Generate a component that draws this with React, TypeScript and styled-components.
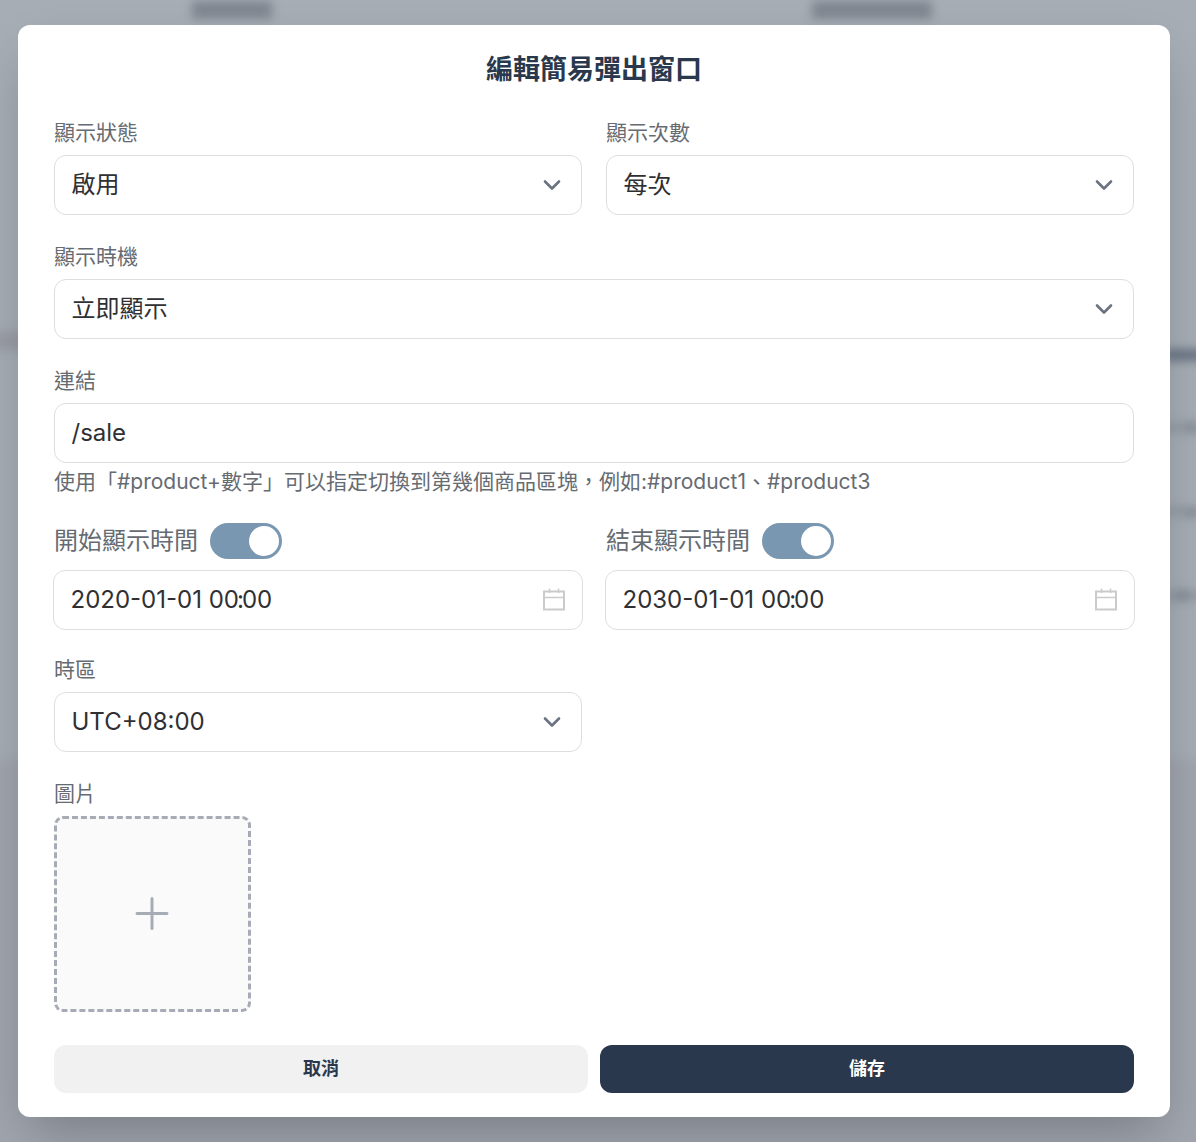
import React from "react";
import styled, { createGlobalStyle } from "styled-components";

const FONT = `Inter, "Noto Sans CJK TC", "Noto Sans", sans-serif`;

const Global = createGlobalStyle`
  html, body { margin: 0; padding: 0; background: #a6adb5; }
  * { box-sizing: border-box; }
  body { font-family: ${FONT}; overflow: hidden; }
`;

const Page = styled.div`
  position: relative;
  width: 1196px;
  height: 1142px;
  overflow: hidden;
  background: #a6adb5;
`;

const Blurred = styled.div`
  position: absolute;
  inset: -20px;
  filter: blur(5px);
`;

const Smudge = styled.div<{ $x: number; $y: number; $w: number; $h: number; $c?: string }>`
  position: absolute;
  left: ${(p) => p.$x + 20}px;
  top: ${(p) => p.$y + 20}px;
  width: ${(p) => p.$w}px;
  height: ${(p) => p.$h}px;
  background: ${(p) => p.$c ?? "#7f8790"};
`;

const Overlay = styled.div`
  position: relative;
  padding: 25px 26px 25px 18px;
`;

const Modal = styled.div`
  width: 1152px;
  height: 1092px;
  background: #fff;
  border-radius: 12px;
  padding: 25px 36px 24px;
  display: flex;
  flex-direction: column;
  box-shadow: 0 25px 50px -12px rgba(0, 0, 0, 0.25);
`;

const Title = styled.h2`
  margin: 0 0 28px;
  text-align: center;
  font-size: 27px;
  line-height: 40px;
  font-weight: 700;
  color: #29384c;
`;

const Grid = styled.div<{ $gap?: number }>`
  display: grid;
  grid-template-columns: 1fr 1fr;
  column-gap: 24px;
  margin-bottom: ${(p) => p.$gap ?? 27}px;
`;

const Field = styled.div<{ $gap?: number }>`
  display: flex;
  flex-direction: column;
  margin-bottom: ${(p) => p.$gap ?? 0}px;
`;

const Label = styled.label`
  font-size: 21px;
  line-height: 30px;
  color: #666b72;
  margin-bottom: 7px;
`;

const Control = styled.div`
  height: 60px;
  border: 1.5px solid #dcdee0;
  border-radius: 12px;
  background: #fff;
  display: flex;
  align-items: center;
  justify-content: space-between;
  padding: 0 20px 0 16.5px;
  font-size: 24px;
  color: #2f3033;
`;

const Value = styled.span<{ $lift: number }>`
  margin-bottom: ${(p) => p.$lift}px;
`;

const Colon = styled.span`
  margin: 0 -2px;
`;

const Chevron = styled.svg`
  width: 18px;
  height: 12px;
  flex: none;
  margin-top: -1px;
`;

const Hint = styled.div`
  margin-top: 4px;
  font-size: 21px;
  line-height: 30px;
  color: #666b72;
`;

const ToggleRow = styled.div`
  display: flex;
  align-items: center;
  gap: 12px;
  height: 36px;
  margin-bottom: 11px;
`;

const ToggleLabel = styled.span`
  font-size: 24px;
  color: #666b72;
  margin-bottom: 6px;
`;

const Toggle = styled.div`
  width: 72px;
  height: 36px;
  border-radius: 18px;
  background: #7a97b1;
  display: flex;
  align-items: center;
  justify-content: flex-end;
  padding-right: 3px;
`;

const Knob = styled.div`
  width: 30px;
  height: 30px;
  border-radius: 50%;
  background: #fff;
`;

const DateControl = styled(Control)`
  width: calc(100% + 2px);
  margin-left: -1px;
  padding: 0 16.5px;
`;

const Upload = styled.div`
  width: 197px;
  height: 196px;
  border: 3px dashed #a6abb6;
  border-radius: 9px;
  background: #fafafa;
  display: flex;
  align-items: center;
  justify-content: center;
`;

const Actions = styled.div`
  display: flex;
  gap: 12px;
  margin-top: 33px;
`;

const Button = styled.button<{ $primary?: boolean }>`
  flex: 1;
  height: 48px;
  border: 0;
  border-radius: 12px;
  padding: 0 0 4px;
  font-family: ${FONT};
  font-size: 18px;
  font-weight: 700;
  background: ${(p) => (p.$primary ? "#29384c" : "#f1f1f2")};
  color: ${(p) => (p.$primary ? "#fff" : "#29384c")};
`;

const ChevronIcon = () => (
  <Chevron viewBox="0 0 18 12" fill="none" stroke="#6b7280" strokeWidth="2.6" strokeLinecap="round" strokeLinejoin="round">
    <path d="M2 2.5 L9 9.5 L16 2.5" />
  </Chevron>
);

const CalendarIcon = () => (
  <svg width="24" height="24" viewBox="0 0 24 24" fill="none" stroke="#cbcbcb" strokeWidth="2">
    <rect x="2" y="3.5" width="20" height="18" />
    <path d="M2 9.5 H22 M7.5 0.5 V5 M16.5 0.5 V5" strokeWidth="1.5" />
  </svg>
);

const DateToggle = ({ label, date }: { label: string; date: string }) => (
  <div>
    <ToggleRow>
      <ToggleLabel>{label}</ToggleLabel>
      <Toggle>
        <Knob />
      </Toggle>
    </ToggleRow>
    <DateControl>
      <Value $lift={2}>
        {date} 00<Colon>:</Colon>00
      </Value>
      <CalendarIcon />
    </DateControl>
  </div>
);

export default function App() {
  return (
    <Page>
      <Global />
      <Blurred>
        <Smudge $x={-20} $y={760} $w={1240} $h={400} $c="#a0a5ae" />
        <Smudge $x={-20} $y={332} $w={50} $h={18} $c="#999ca4" />
        <Smudge $x={192} $y={1} $w={80} $h={18} />
        <Smudge $x={812} $y={1} $w={120} $h={18} />
        <Smudge $x={1165} $y={349} $w={40} $h={12} $c="#6a7685" />
        <Smudge $x={1165} $y={423} $w={40} $h={9} $c="#939aa3" />
        <Smudge $x={1186} $y={422} $w={10} $h={11} $c="#858c96" />
        <Smudge $x={1165} $y={507} $w={40} $h={9} $c="#939aa3" />
        <Smudge $x={1186} $y={507} $w={10} $h={11} $c="#858c96" />
        <Smudge $x={1165} $y={591} $w={40} $h={9} $c="#939aa3" />
        <Smudge $x={1176} $y={590} $w={14} $h={11} $c="#858c96" />
      </Blurred>
      <Overlay>
        <Modal>
          <Title>編輯簡易彈出窗口</Title>
          <Grid>
            <Field>
              <Label>顯示狀態</Label>
              <Control><Value $lift={6}>啟用</Value><ChevronIcon /></Control>
            </Field>
            <Field>
              <Label>顯示次數</Label>
              <Control><Value $lift={6}>每次</Value><ChevronIcon /></Control>
            </Field>
          </Grid>
          <Field $gap={27}>
            <Label>顯示時機</Label>
            <Control><Value $lift={6}>立即顯示</Value><ChevronIcon /></Control>
          </Field>
          <Field $gap={26}>
            <Label>連結</Label>
            <Control><Value $lift={2}>/sale</Value></Control>
            <Hint>使用「#product+數字」可以指定切換到第幾個商品區塊，例如:#product1、#product3</Hint>
          </Field>
          <Grid $gap={25}>
            <DateToggle label="開始顯示時間" date="2020-01-01" />
            <DateToggle label="結束顯示時間" date="2030-01-01" />
          </Grid>
          <Grid>
            <Field>
              <Label>時區</Label>
              <Control><Value $lift={2}>UTC+08:00</Value><ChevronIcon /></Control>
            </Field>
          </Grid>
          <Field>
            <Label>圖片</Label>
            <Upload>
              <svg width="36" height="36" viewBox="0 0 36 36" fill="none" stroke="#a6abb6" strokeWidth="3" strokeLinecap="round">
                <path d="M17 2.5 V32.5 M2 17.5 H32" />
              </svg>
            </Upload>
          </Field>
          <Actions>
            <Button>取消</Button>
            <Button $primary>儲存</Button>
          </Actions>
        </Modal>
      </Overlay>
    </Page>
  );
}
